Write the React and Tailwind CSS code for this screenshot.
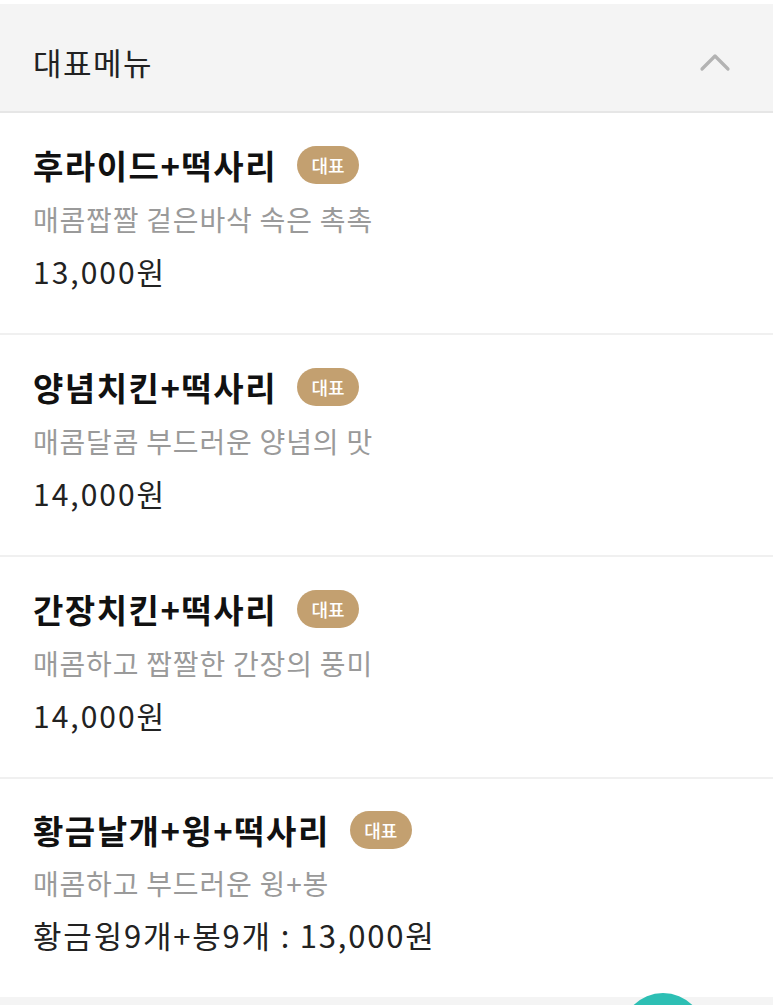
import React from "react";

const items = [
  { title: "후라이드+떡사리", desc: "매콤짭짤 겉은바삭 속은 촉촉", price: "13,000원" },
  { title: "양념치킨+떡사리", desc: "매콤달콤 부드러운 양념의 맛", price: "14,000원" },
  { title: "간장치킨+떡사리", desc: "매콤하고 짭짤한 간장의 풍미", price: "14,000원" },
];

function Badge() {
  return (
    <span className="ml-[20px] inline-flex h-[38px] w-[62px] items-center justify-center rounded-full bg-[#c3a070] text-[18px] font-medium text-white">
      대표
    </span>
  );
}

function Item({ title, desc, price }) {
  return (
    <div className="flex flex-col border-b-2 border-[#f0f0f0] bg-white pl-[33px] pt-[32px] pb-[44px]">
      <div className="flex h-[40px] items-center">
        <span className="text-[33px] font-bold leading-[40px] tracking-[1.5px] text-[#111]">{title}</span>
        <Badge />
      </div>
      <div className="mt-[16px] text-[28px] leading-[36px] tracking-[0.8px] text-[#9a9a9a]">{desc}</div>
      <div className="mt-[16px] text-[30px] leading-[36px] tracking-[2px] text-[#222]">{price}</div>
    </div>
  );
}

export default function App() {
  return (
    <div className="relative h-[1005px] w-[773px] overflow-hidden bg-white" style={{ fontFamily: '"Noto Sans CJK KR", "Noto Sans", sans-serif' }}>
      <div className="h-[4px] bg-white" />
      <div className="flex h-[109px] items-center justify-between border-b-2 border-[#e6e6e6] bg-[#f4f4f4] pl-[33px] pr-[42px] pt-[8px]">
        <span className="text-[31px] leading-none tracking-[1.5px] text-[#222]">대표메뉴</span>
        <svg width="32" height="20" viewBox="0 0 32 20" fill="none">
          <path d="M3 17 L16 4 L29 17" stroke="#b3b3b3" strokeWidth="3.2" strokeLinecap="round" strokeLinejoin="round" />
        </svg>
      </div>
      {items.map((it) => (
        <Item key={it.title} {...it} />
      ))}
      <div className="flex flex-col bg-white pl-[33px] pt-[31px] pb-[44px]">
        <div className="flex h-[40px] items-center">
          <span className="text-[33px] font-bold leading-[40px] tracking-[1.5px] text-[#111]">황금날개+윙+떡사리</span>
          <Badge />
        </div>
        <div className="mt-[15px] text-[28px] leading-[36px] tracking-[0.8px] text-[#9a9a9a]">매콤하고 부드러운 윙+봉</div>
        <div className="mt-[16px] text-[31px] leading-[36px] tracking-[1.8px] text-[#222]">황금윙9개+봉9개 : 13,000원</div>
      </div>
      <div className="h-[20px] bg-[#f4f4f4]" />
      <div className="absolute left-[621px] top-[993px] h-[84px] w-[84px] rounded-full bg-[#2dbfb4]" />
    </div>
  );
}
